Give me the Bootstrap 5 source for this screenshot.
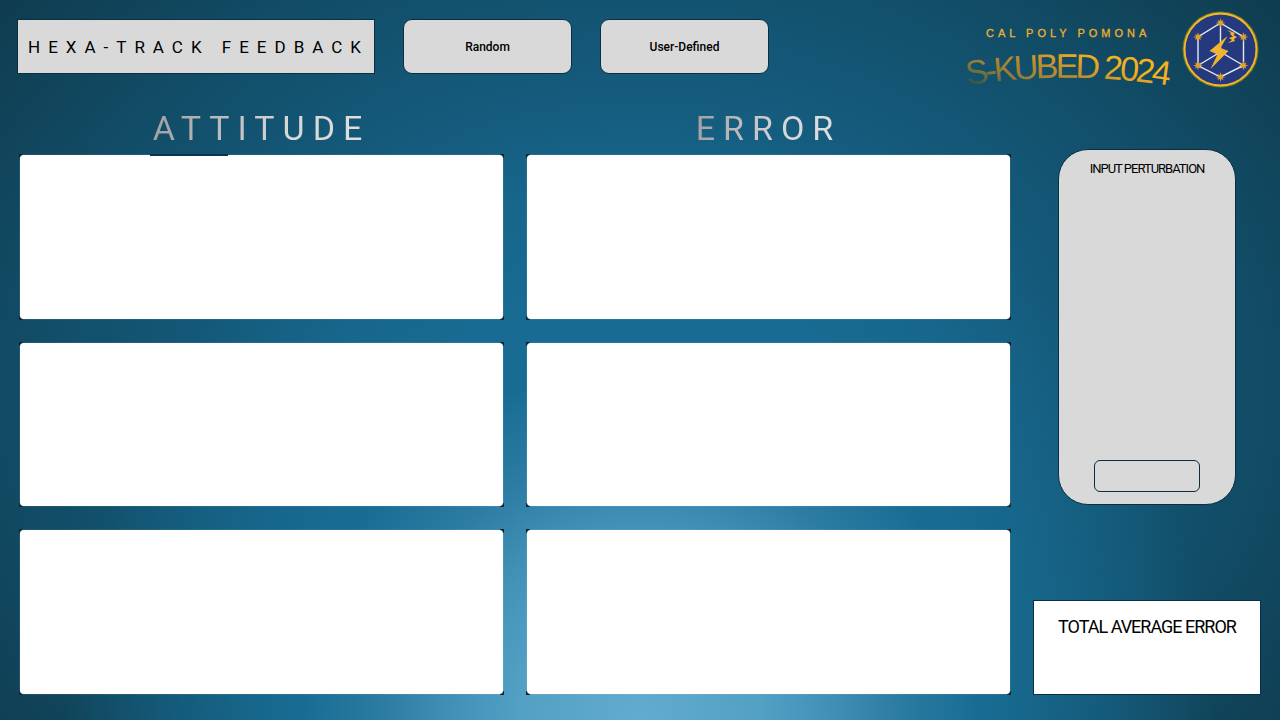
<!DOCTYPE html>
<html lang="en">
<head>
<meta charset="utf-8">
<meta name="viewport" content="width=device-width, initial-scale=1">
<title>Hexa-Track Feedback</title>
<link href="https://cdn.jsdelivr.net/npm/bootstrap@5.3.0/dist/css/bootstrap.min.css" rel="stylesheet">
<style>
  body {
    font-family: "Liberation Sans", Arial, sans-serif;
    color: #000;
    background:
      radial-gradient(640px 670px at 50% 100%, #62abd0 0%, #52a0c4 19%, #4090b6 30%, #2c7ca3 40%, #186c93 53%, rgba(24,108,147,0) 90%),
      radial-gradient(ellipse 880px 660px at 50% 54%, #186c93 0%, #17648a 30%, #12506c 64%, #0f394a 98%);
    background-color: #124f6a;
  }
  .page { padding: 8px 19px 25px 17px; }
  .top-controls { padding-top: 11px; gap: 28px; }
  .app-title {
    width: 358px; height: 55px; padding-left: 10px;
    background: #d9d9d9; border: 1px solid #0a2f41;
    font: 400 17px Roboto, sans-serif; letter-spacing: 8px; white-space: nowrap;
  }
  .mode-btn {
    width: 169px; height: 55px; border-radius: 9px;
    background: #d9d9d9; border: 1px solid #0a2f41; color: #000;
    font: 500 12px Roboto, sans-serif;
  }
  .mode-btn:hover { background: #e6e6e6; }
  .plots { gap: 22px; padding-left: 2px; }
  .plot-title {
    height: 62px; padding-top: 19px; margin: 0;
    font: 400 34px/34px Roboto, sans-serif; letter-spacing: 8px; text-align: center;
  }
  .plot-title span {
    background: linear-gradient(100deg, #a0a0a0, #d6d6d6 60%, #e0e0e0);
    -webkit-background-clip: text; background-clip: text; color: transparent;
  }
  .plot-stack { gap: 22px; }
  .plot {
    min-height: 120px; padding: 1px;
    background:
      linear-gradient(#0b2532, #0b2532) left top / 4px 4px no-repeat,
      linear-gradient(#0b2532, #0b2532) right top / 4px 4px no-repeat,
      linear-gradient(#0b2532, #0b2532) left bottom / 4px 4px no-repeat,
      linear-gradient(#0b2532, #0b2532) right bottom / 4px 4px no-repeat;
  }
  .plot-surface { background: #fff; border-radius: 4px; box-shadow: 0 0 1px rgba(255,255,255,.7); }
  .marked::before {
    content: ""; position: absolute; top: 0; left: 27%; width: 16%; height: 2px; background: #0b3450;
  }
  .side { width: 228px; padding-top: 57px; gap: 95px; margin-left: 22px; }
  .perturb { width: 178px; background: #d9d9d9; border: 1px solid #0a2f41; border-radius: 30px; padding: 11px 10px 12px; }
  .perturb label { font: 400 13px/16px Roboto, sans-serif; letter-spacing: -1px; white-space: nowrap; }
  .perturb input { width: 106px; height: 32px; border: 1px solid #0a2f41; border-radius: 6px; background: transparent; text-align: center; }
  .total { height: 95px; background: #fff; border: 1px solid #0a2f41; padding-top: 16px; }
  .total h2 { font: 400 18px/20px Roboto, sans-serif; letter-spacing: -1px; margin: 0; white-space: nowrap; }
</style>
</head>
<body>
<div class="page min-vh-100 d-flex flex-column">
  <header class="d-flex justify-content-between align-items-start">
    <div class="top-controls d-flex">
      <h1 class="app-title d-flex align-items-center mb-0">HEXA-TRACK FEEDBACK</h1>
      <button type="button" class="mode-btn">Random</button>
      <button type="button" class="mode-btn">User-Defined</button>
    </div>
    <svg width="300" height="84" viewBox="961 8 300 84" role="img" aria-label="Cal Poly Pomona S-Kubed 2024">
      <defs>
        <linearGradient id="gold" gradientUnits="userSpaceOnUse" x1="1080" y1="50" x2="1058" y2="115">
          <stop offset="0" stop-color="#f9b020"/><stop offset=".4" stop-color="#bd8c2b"/><stop offset=".7" stop-color="#917b34"/><stop offset="1" stop-color="#245049"/>
        </linearGradient>
        <path id="arch" d="M967 85 Q1070 70 1172 86"/>
        <path id="star" d="M0 -5 L.8 -2 L3 -3 L2 -.8 L5 0 L2 .8 L3 3 L.8 2 L0 5 L-.8 2 L-3 3 L-2 .8 L-5 0 L-2 -.8 L-3 -3 L-.8 -2Z" fill="#dda030"/>
      </defs>
      <text x="986" y="37" font-family="Liberation Sans" font-size="11" letter-spacing="4" fill="#f0b02c" stroke="#f0b02c" stroke-width=".3">CAL POLY POMONA</text>
      <text font-family="Liberation Sans" font-size="34" letter-spacing="-3" fill="url(#gold)"><textPath href="#arch">S-KUBED 2024</textPath></text>
      <circle cx="1220.5" cy="49.5" r="36.500" fill="#25397f" stroke="#7a7a1e" stroke-width="3"/>
      <circle cx="1220.5" cy="49.5" r="36" fill="none" stroke="#f2b632" stroke-width="1.8"/>
      <path d="M1220.5 23 L1243.5 37 V65.5 L1220.5 77 L1198 65.5 V37Z M1220.5 23 V52 M1198 65.5 L1220.5 52 L1243.5 65.5" fill="none" stroke="#e6e8f4" stroke-width="1.4"/>
      <use href="#star" x="1220.5" y="23"/><use href="#star" x="1243.5" y="37"/><use href="#star" x="1243.5" y="65.5"/>
      <use href="#star" x="1220.5" y="77"/><use href="#star" x="1198" y="65.5"/><use href="#star" x="1198" y="37"/>
      <path d="M1227.500 36 L1209.500 51 L1217.500 54.500 L1210.500 69 L1228.500 51 L1220.500 48Z" fill="#f4b32c"/>
      <path d="M1227 30 L1235 33 L1233.500 35 L1237 37 L1234 39 L1235 41 L1228 43 L1232 40 L1229 38 L1233 36.500 L1230 34 L1231 33Z" fill="#f4b32c"/>
    </svg>
  </header>

  <main class="d-flex flex-grow-1">
    <div class="plots d-flex flex-grow-1">
      <section class="d-flex flex-column flex-fill w-50">
        <h2 class="plot-title"><span>ATTITUDE</span></h2>
        <div class="plot-stack d-flex flex-column flex-grow-1">
          <div class="plot marked position-relative d-flex flex-fill"><div class="plot-surface flex-fill"></div></div>
          <div class="plot d-flex flex-fill"><div class="plot-surface flex-fill"></div></div>
          <div class="plot d-flex flex-fill"><div class="plot-surface flex-fill"></div></div>
        </div>
      </section>
      <section class="d-flex flex-column flex-fill w-50">
        <h2 class="plot-title"><span>ERROR</span></h2>
        <div class="plot-stack d-flex flex-column flex-grow-1">
          <div class="plot d-flex flex-fill"><div class="plot-surface flex-fill"></div></div>
          <div class="plot d-flex flex-fill"><div class="plot-surface flex-fill"></div></div>
          <div class="plot d-flex flex-fill"><div class="plot-surface flex-fill"></div></div>
        </div>
      </section>
    </div>
    <aside class="side d-flex flex-column flex-shrink-0">
      <div class="perturb d-flex flex-column align-items-center justify-content-between flex-grow-1 align-self-center">
        <label for="perturbation">INPUT PERTURBATION</label>
        <input id="perturbation" type="text">
      </div>
      <div class="total text-center"><h2>TOTAL AVERAGE ERROR</h2></div>
    </aside>
  </main>
</div>
<script src="https://cdn.jsdelivr.net/npm/bootstrap@5.3.0/dist/js/bootstrap.bundle.min.js"></script>
</body>
</html>
